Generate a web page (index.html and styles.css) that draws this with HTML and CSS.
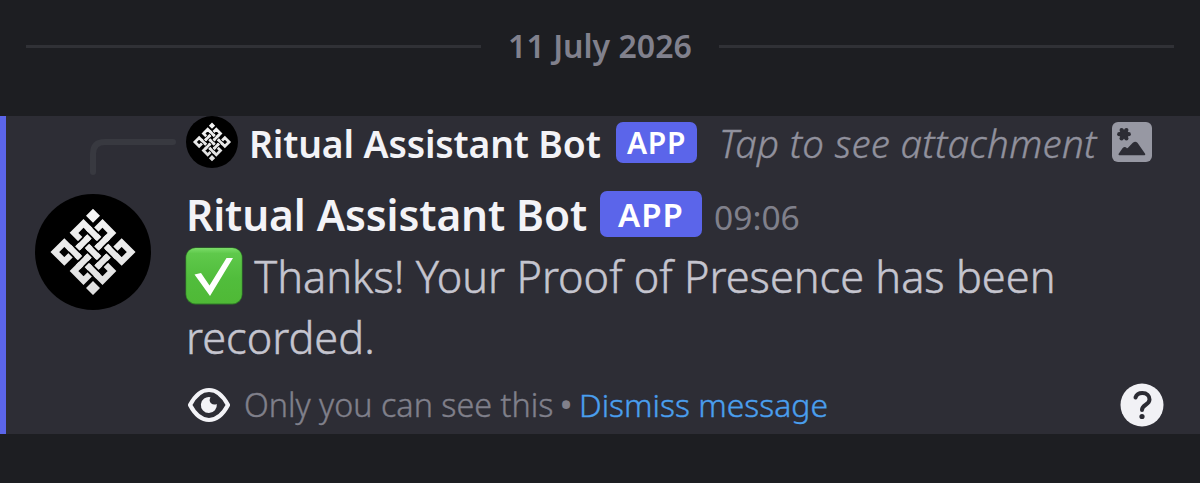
FILE: index.html
```html
<!DOCTYPE html>
<html lang="en">
<head>
<meta charset="utf-8">
<title>Messages</title>
<link rel="stylesheet" href="styles.css">
</head>
<body>
<svg class="defs" aria-hidden="true">
  <defs>
    <linearGradient id="silver" gradientUnits="userSpaceOnUse" x1="0" y1="-128" x2="0" y2="128">
      <stop offset="0" stop-color="#f6f6f6"/><stop offset="1" stop-color="#dedede"/>
    </linearGradient>
    <symbol id="knot" viewBox="-174 -174 348 348">
      <circle r="174" fill="#000"/>
      <g fill="none" stroke="url(#silver)" stroke-width="18.5">
        <path d="M-28.500-86L-57-57.500L57 57L28.500 86L-86-28.500L-114.500 0L-86 28.500L28.500-86L57-57L-57 57L-28.500 86L86-28.500L114.500 0L86 28.500L-28.500-86L-57-57"/>
      </g>
      <g stroke="#000" stroke-width="29">
        <path d="M-8-65l16 16M-8-8l16 16M-8 49l16 16M-65-8l16 16M49-8l16 16"/>
        <path d="M-36.500-20.500l16-16M20.500-20.500l16-16M-36.500 36.500l16-16M20.500 36.500l16-16"/>
      </g>
      <g stroke="url(#silver)" stroke-width="18.5">
        <path d="M-16-73l32 32M-16-16l32 32M-16 41l32 32M-73-16l32 32M41-16l32 32"/>
        <path d="M-44.500-12.500l32-32M12.500-12.500l32-32M-44.500 44.500l32-32M12.500 44.500l32-32"/>
      </g>
      <path fill="url(#silver)" d="M0-130l21 21-21 21-21-21zM0 87l21 21-21 21-21-21z"/>
    </symbol>
  </defs>
</svg>

<div class="divider"><span class="date">11 July 2026</span></div>

<article class="message">
  <div class="reply">
    <svg class="spine" viewBox="0 0 86 36"><path d="M3 33V15Q3 3 15 3H83"/></svg>
    <svg class="avatar-small"><use href="#knot"/></svg>
    <span class="reply-name">Ritual Assistant Bot</span>
    <span class="badge badge-small">APP</span>
    <span class="attachment">Tap to see attachment</span>
    <svg class="image-icon" viewBox="0 0 40 40">
      <rect width="40" height="40" rx="6" fill="#9798a3"/>
      <g fill="#2d2d35">
        <circle cx="12" cy="12.200" r="4.800"/>
        <circle cx="9.600" cy="8" r="2.100"/><circle cx="14.400" cy="8" r="2.100"/>
        <circle cx="7.200" cy="12.200" r="2.100"/><circle cx="16.800" cy="12.200" r="2.100"/>
        <circle cx="9.600" cy="16.400" r="2.100"/><circle cx="14.400" cy="16.400" r="2.100"/>
      </g>
      <path fill="#2d2d35" stroke="#2d2d35" stroke-width="2" stroke-linejoin="round" d="M7.500 32.300l4-5.600q1.200-1.300 2.600 0l1.400 1L21.500 21.500q1.700-1.300 3.300 0l7.500 10.800z"/>
    </svg>
  </div>

  <div class="body">
    <svg class="avatar"><use href="#knot"/></svg>
    <div class="content">
      <header class="author">
        <span class="name">Ritual Assistant Bot</span>
        <span class="badge">APP</span>
        <time class="time">09:06</time>
      </header>
      <p class="text"><svg class="check" viewBox="0 0 58 58">
        <defs>
          <linearGradient id="green" x1="0" y1="0" x2="0" y2="1"><stop offset="0" stop-color="#7bdc68"/><stop offset=".1" stop-color="#5fc94b"/><stop offset=".55" stop-color="#51bd3c"/><stop offset="1" stop-color="#4fb936"/></linearGradient>
        </defs>
        <rect x=".5" y=".5" width="57" height="57" rx="10" fill="#2f7d26"/>
        <rect x="1.200" y="1" width="55.600" height="55.500" rx="9.500" fill="url(#green)"/>
        <path fill="#fff" d="M9.500 27.500L16 26l8.500 12.500L41.500 11H48L25 49z"/>
      </svg> Thanks! Your Proof of Presence has been recorded.</p>
      <footer class="notice">
        <svg class="eye" viewBox="0 0 44 36">
          <path fill="none" stroke="#f3f3f7" stroke-width="4.200" stroke-linejoin="round" d="M3 18Q11 3 22 3T41 18Q33 33 22 33T3 18z"/>
          <path fill="#f3f3f7" d="M23.500 10.200A8 8 0 1 0 29.800 17Q26.500 18.500 24 16.200T23.500 10.200z"/>
        </svg>
        <span class="only">Only you can see this</span>
        <span class="dot">•</span>
        <a class="dismiss">Dismiss message</a>
        <svg class="help" viewBox="0 0 44 44">
          <circle cx="22" cy="22" r="21.500" fill="#f1f1f5"/>
          <path fill="none" stroke="#2b2b33" stroke-width="4" stroke-linecap="round" d="M15.500 14.500Q17 10 22.300 10C27 10 29.500 12.800 29.500 16.500C29.500 22 22 21.500 22 27"/>
          <circle cx="22" cy="33.500" r="2.600" fill="#2b2b33"/>
        </svg>
      </footer>
    </div>
  </div>
</article>
</body>
</html>
```
FILE: styles.css
```css
* { box-sizing: border-box; }

body {
  margin: 0;
  height: 483px;
  overflow: hidden;
  background: #1d1e22;
  font-family: "Noto Sans", "Open Sans", sans-serif;
  white-space: nowrap;
}

svg { display: block; flex: none; }
.defs { position: absolute; width: 0; height: 0; }

.divider {
  display: flex;
  align-items: center;
  height: 92px;
  margin: 0 26px 24px;
}
.divider::before,
.divider::after {
  content: "";
  flex: 1;
  height: 3px;
  background: #303136;
}
.date {
  width: 238px;
  padding-bottom: 1px;
  text-align: center;
  color: #81818d;
  font-size: 32.1px;
  font-weight: 600;
  line-height: 44px;
}

.message {
  height: 317.5px;
  border-left: 6px solid #5b65ea;
  background: #2d2d35;
}

.reply {
  display: flex;
  align-items: center;
  height: 52px;
  padding-left: 84px;
}
.reply > * { flex: none; }
.spine { width: 86px; height: 36px; margin-top: 35px; margin-bottom: 6px; }
.spine path { fill: none; stroke: #383940; stroke-width: 6; stroke-linecap: round; }
.avatar-small { width: 52px; height: 52px; margin-left: 10px; }
.reply-name {
  width: 379px;
  padding: 2px 0 0 11px;
  color: #f3f3f7;
  font-size: 37.3px;
  font-weight: 600;
  letter-spacing: -.15px;
}
.badge {
  display: flex;
  align-items: center;
  justify-content: center;
  width: 102px;
  height: 46px;
  border-radius: 7px;
  background: #5b65ea;
  color: #fff;
  font-size: 33px;
  font-weight: 600;
  letter-spacing: 1.1px;
}
.badge-small {
  width: 81px;
  height: 41px;
  margin-left: -1px;
  font-size: 30px;
  letter-spacing: .7px;
}
.attachment {
  width: 396px;
  padding: 2px 0 0 22px;
  color: #91919d;
  font-size: 38.5px;
  font-style: italic;
  font-weight: 300;
  letter-spacing: .3px;
  -webkit-text-stroke: .4px currentColor;
}
.image-icon { width: 40px; height: 40px; margin-left: 18.5px; }

.body { display: flex; padding-left: 29px; }
.avatar { width: 116px; height: 116px; margin-top: 26px; }
.content { flex: 1; padding: 23px 0 0 34px; }
.author { display: flex; align-items: center; height: 46px; }
.name {
  width: 415px;
  padding-left: 1px;
  color: #f3f3f7;
  font-size: 42.4px;
  font-weight: 600;
  letter-spacing: -.1px;
}
.time { margin: 6px 0 0 12px; color: #80808b; font-size: 33.6px; font-weight: 400; }

.text {
  width: 960px;
  margin: 9px 0 15px;
  padding-left: 1px;
  color: #c5c5cf;
  font-size: 43.3px;
  font-weight: 300;
  line-height: 61px;
  white-space: normal;
  -webkit-text-stroke: .5px currentColor;
}
.check {
  display: inline-block;
  width: 58px;
  height: 58px;
  margin: -16px 0 0 -1px;
  vertical-align: -12px;
}

.notice { display: flex; align-items: center; height: 44px; font-size: 32.3px; font-weight: 300; -webkit-text-stroke: .4px currentColor; }
.only, .dot, .dismiss { margin-bottom: 2px; color: #80808b; }
.eye { width: 44px; height: 36px; margin-left: 2px; }
.only { width: 315px; margin-left: 13px; }
.dot { width: 14px; text-align: center; font-size: 31px; font-weight: 600; line-height: 44px; -webkit-text-stroke: 0; }
.notice .dismiss { margin-left: 6px; color: #4a9fee; font-size: 31.9px; }
.help { width: 44px; height: 44px; margin-left: auto; margin-right: 36px; }
```
